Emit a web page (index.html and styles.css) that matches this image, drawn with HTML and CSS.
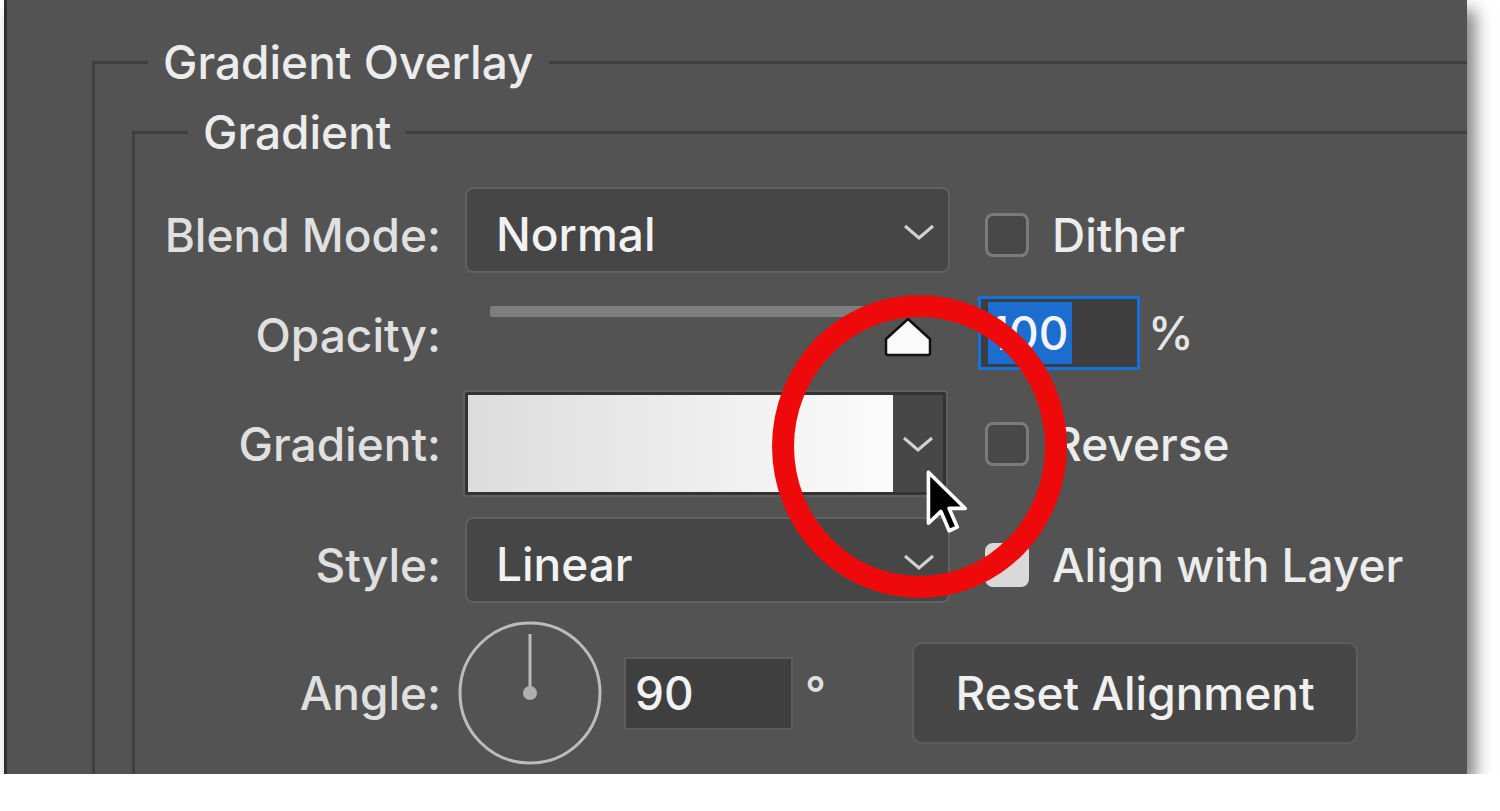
FILE: index.html
```html
<!DOCTYPE html>
<html lang="en">
<head>
<meta charset="UTF-8" />
<meta name="viewport" content="width=device-width, initial-scale=1" />
<title>Gradient Overlay</title>
<link rel="stylesheet" href="styles.css">
</head>
<body>

<div class="page">
  <div class="panel">
    <fieldset class="group group-outer">
      <legend>Gradient Overlay</legend>
      <fieldset class="group group-inner">
        <legend>Gradient</legend>
        <div class="form">
          <label class="lbl low">Blend Mode:</label>
          <div class="select">
            <span>Normal</span>
            <svg class="chev" viewBox="0 0 32 18"><path d="M2 3 L16 15 L30 3"/></svg>
          </div>
          <label class="check low"><span class="box"></span>Dither</label>

          <label class="lbl lbl-opacity">Opacity:</label>
          <div class="slider">
            <div class="track"></div>
            <svg class="thumb" viewBox="0 0 50 40"><path d="M25 2 L47 22 L47 36 Q47 38 45 38 L5 38 Q3 38 3 36 L3 22 Z"/></svg>
          </div>
          <div class="num">
            <span class="num-field"><span class="sel">100</span></span>
            <span class="unit">%</span>
          </div>

          <label class="lbl">Gradient:</label>
          <div class="swatch">
            <div class="ramp"></div>
            <div class="swatch-btn">
              <svg class="chev" viewBox="0 0 32 18"><path d="M2 3 L16 15 L30 3"/></svg>
            </div>
          </div>
          <label class="check"><span class="box"></span>Reverse</label>

          <label class="lbl low">Style:</label>
          <div class="select">
            <span>Linear</span>
            <svg class="chev" viewBox="0 0 32 18"><path d="M2 3 L16 15 L30 3"/></svg>
          </div>
          <label class="check low"><span class="box on"></span>Align with Layer</label>

          <label class="lbl lbl-angle">Angle:</label>
          <div class="angle">
            <svg class="dial" viewBox="0 0 144 144">
              <circle cx="72" cy="72" r="70"/>
              <line x1="72" y1="72" x2="72" y2="13"/>
              <circle class="dot" cx="72" cy="72" r="7"/>
            </svg>
            <span class="angle-field">90</span>
            <span class="deg">°</span>
            <button class="reset" type="button">Reset Alignment</button>
          </div>
        </div>
      </fieldset>
    </fieldset>

    <!-- annotation over the screenshot -->
    <div class="ring"></div>
    <svg class="cursor" viewBox="0 0 13 21">
      <path d="M1 1 L1 16.5 L4.8 12.9 L7.3 18.8 L9.8 17.7 L7.3 12 L12.2 12 Z"/>
    </svg>
  </div>
</div>

</body>
</html>
```

FILE: styles.css
```css
body {
  margin: 0;
  background-color: #fff;
  font-family: Inter, "Liberation Sans", sans-serif;
}
.page {
  padding-left: 4px;
}
.panel {
  position: relative;
  width: 1460px;
  height: 774px;
  background-color: #535353;
  border-left: 3px solid #2f2f2f;
  overflow: hidden;
  box-shadow: 8px 10px 16px rgba(0,0,0,0.5);
}

/* fieldset groups */
.group {
  border: 3px solid #3f3f3f;
  margin: 0;
  padding: 0;
  min-width: 0;
}
.group > legend {
  font-size: 46px;
  line-height: 56px;
  font-weight: 500;
  color: #ececec;
  padding: 0 15px;
}
.group-outer {
  margin: 34px -80px 0 85px;
  padding: 14px 0 0 37px;
  height: 800px;
}
.group-outer > legend {
  margin-left: 16px;
}
.group-inner {
  padding: 27px 0 0 0;
  height: 800px;
}
.group-inner > legend {
  margin-left: 53px;
}

/* form grid */
.form {
  display: grid;
  grid-template-columns: 330px 520px 1fr;
  grid-template-rows: 86px 77px 107px 86px 143px;
  row-gap: 20px;
  align-items: center;
  font-size: 46px;
  font-weight: 500;
}
.lbl {
  text-align: right;
  padding-right: 24px;
  color: #e0e0e0;
}
.low {
  margin-top: 9px;
}
.lbl-opacity {
  margin-top: 7px;
}
.lbl-angle, .angle {
  margin-top: -3px;
}

.select {
  width: 485px;
  height: 86px;
  box-sizing: border-box;
  border: 2px solid #616161;
  border-radius: 8px;
  background-color: #464646;
  display: flex;
  align-items: center;
  justify-content: space-between;
  padding: 8px 13px 0 29px;
  color: #f2f2f2;
}
.select .chev {
  margin-top: -4px;
}
.chev {
  width: 32px;
  height: 18px;
  fill: none;
  stroke: #d2d2d2;
  stroke-width: 3;
}

.check {
  display: flex;
  align-items: center;
  gap: 23px;
  color: #ececec;
}
.box {
  width: 44px;
  height: 44px;
  box-sizing: border-box;
  border: 3px solid #7b7b7b;
  border-radius: 8px;
  background-color: #484848;
}
.box.on {
  background-color: #d9d9d9;
  border-color: #d9d9d9;
}

/* opacity */
.slider {
  align-self: start;
  padding-top: 13px;
}
.track {
  margin-left: 25px;
  width: 417px;
  height: 11px;
  border-radius: 2px;
  background-color: #7e7e7e;
}
.thumb {
  display: block;
  margin-left: 418px;
  width: 50px;
  height: 40px;
  fill: #fafafa;
  stroke: #111;
  stroke-width: 2.5;
  stroke-linejoin: round;
}
.num {
  display: flex;
  align-items: center;
  gap: 8px;
  margin-left: -7px;
  align-self: end;
}
.num-field {
  width: 162px;
  height: 74px;
  box-sizing: border-box;
  border: 3px solid #1570e0;
  background-color: #3d3d3d;
  padding: 3px 0 3px 7px;
  display: flex;
}
.sel {
  background-color: #1c6dd0;
  color: #f4f4f4;
  line-height: 62px;
  padding: 0 4px 0 2px;
}
.unit {
  color: #e6e6e6;
}

/* gradient swatch */
.swatch {
  width: 485px;
  height: 107px;
  margin-left: -2px;
  box-sizing: border-box;
  border: 2px solid #5f5f5f;
  border-radius: 4px;
  background-color: #333;
  padding: 3px;
  display: flex;
}
.ramp {
  flex: 1;
  background: linear-gradient(to right, #dcdcdc, #ececec 50%, #fbfbfb);
}
.swatch-btn {
  width: 50px;
  background-color: #474747;
  display: flex;
  align-items: center;
  justify-content: center;
}

/* angle */
.angle {
  grid-column: 2 / 4;
  display: flex;
  align-items: center;
  margin-left: -7px;
}
.dial {
  width: 144px;
  height: 144px;
  fill: none;
  stroke: #bcbcbc;
  stroke-width: 3;
}
.dial .dot {
  fill: #b0b0b0;
  stroke: none;
}
.angle-field {
  margin-left: 22px;
  width: 169px;
  height: 73px;
  box-sizing: border-box;
  border: 2px solid #5d5d5d;
  background-color: #3f3f3f;
  padding-left: 9px;
  line-height: 69px;
  color: #f2f2f2;
}
.deg {
  margin-left: 12px;
  color: #e0e0e0;
}
.reset {
  margin-left: 86px;
  width: 446px;
  height: 102px;
  box-sizing: border-box;
  border: 2px solid #5d5d5d;
  border-radius: 10px;
  background-color: #474747;
  font: 500 46px Inter, "Liberation Sans", sans-serif;
  color: #f0f0f0;
}

/* red circle and pointer */
.ring {
  position: absolute;
  left: 765px;
  top: 295px;
  width: 295px;
  height: 303px;
  box-sizing: border-box;
  border: 22px solid #ee0a0a;
  border-radius: 50%;
}
.cursor {
  position: absolute;
  left: 918px;
  top: 469px;
  width: 43px;
  height: 69px;
  fill: #000;
  stroke: #fff;
  stroke-width: 1.1;
  stroke-linejoin: round;
}
```
